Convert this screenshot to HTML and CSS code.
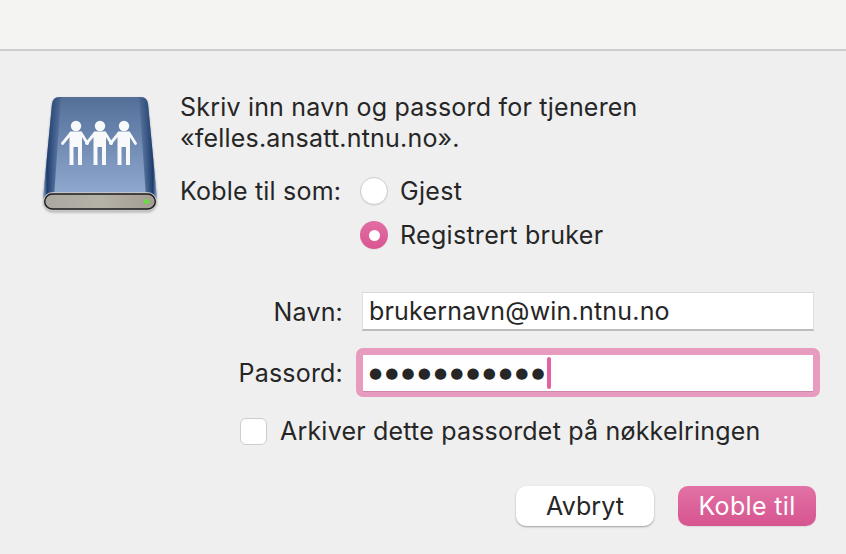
FILE: index.html
```html
<!DOCTYPE html>
<html lang="no">
<head>
<meta charset="utf-8">
<title>Koble til tjener</title>
<link rel="stylesheet" href="styles.css">
</head>
<body>
<div class="titlebar"></div>
<main class="dialog">
  <section class="intro">
    <svg class="drive" viewBox="42 97 116 116" width="116" height="116" aria-hidden="true">
      <defs>
        <linearGradient id="bodyFill" x1="0" y1="0" x2="0" y2="1">
          <stop offset="0" stop-color="#536f98"/>
          <stop offset="1" stop-color="#92abd1"/>
        </linearGradient>
        <linearGradient id="edgeL" x1="0" y1="0" x2="1" y2="0">
          <stop offset="0" stop-color="#9db0cc"/>
          <stop offset=".2" stop-color="#1d3c6d"/>
          <stop offset="1" stop-color="#1d3c6d" stop-opacity="0"/>
        </linearGradient>
        <linearGradient id="edgeR" x1="1" y1="0" x2="0" y2="0">
          <stop offset="0" stop-color="#9db0cc"/>
          <stop offset=".2" stop-color="#1d3c6d"/>
          <stop offset="1" stop-color="#1d3c6d" stop-opacity="0"/>
        </linearGradient>
        <linearGradient id="slot" x1="0" y1="0" x2="1" y2="0">
          <stop offset="0" stop-color="#aaa89f"/>
          <stop offset=".5" stop-color="#b5b2a8"/>
          <stop offset="1" stop-color="#a39c92"/>
        </linearGradient>
        <g id="person">
          <circle cx="76" cy="126" r="5.2"/>
          <path d="M71 131.500H81Q82 131.500 82 133V165H78V147H73.500V165H69.500V133Q69.500 131.500 71 131.500Z"/>
          <path d="M71 133L62.500 143.500M81 133L87.500 143.500" fill="none" stroke="#f8f9fb" stroke-width="2.800" stroke-linecap="round"/>
        </g>
      </defs>
      <path d="M59 97H141Q147 97 148 104L157 198H43L52 104Q53 97 59 97Z" fill="url(#bodyFill)"/>
      <path d="M59 97Q53 97 52 104L43 198H54L60.500 104Q61 99 63 97Z" fill="url(#edgeL)"/>
      <path d="M141 97Q147 97 148 104L157 198H146L139.500 104Q139 99 137 97Z" fill="url(#edgeR)"/>
      <rect x="43" y="192" width="114" height="19.500" rx="9.750" fill="#c3c5c8"/>
      <rect x="44.700" y="194" width="110.600" height="15" rx="7.500" fill="url(#slot)" stroke="#1b1b1b" stroke-width="1.400"/>
      <circle cx="146.500" cy="201.500" r="2.500" fill="#66e03f"/>
      <g fill="#f8f9fb">
        <use href="#person"/>
        <use href="#person" x="24"/>
        <use href="#person" x="48"/>
      </g>
    </svg>
    <div class="intro-text">
      <p class="message">Skriv inn navn og passord for tjeneren<br>«felles.ansatt.ntnu.no».</p>
      <div class="connect-as">
        <span class="connect-label">Koble til som:</span>
        <div class="radios">
          <label class="radio-row"><span class="radio"></span>Gjest</label>
          <label class="radio-row"><span class="radio radio-on"></span>Registrert bruker</label>
        </div>
      </div>
    </div>
  </section>
  <section class="fields">
    <span class="field-label">Navn:</span>
    <div class="field">brukernavn@win.ntnu.no</div>
    <span class="field-label">Passord:</span>
    <div class="field field-focus"><span class="dots">●●●●●●●●●●●</span><span class="caret"></span></div>
  </section>
  <label class="keychain"><span class="checkbox"></span>Arkiver dette passordet på nøkkelringen</label>
  <div class="actions">
    <button class="btn" type="button">Avbryt</button>
    <button class="btn btn-primary" type="button">Koble til</button>
  </div>
</main>
</body>
</html>
```
FILE: styles.css
```css
* { box-sizing: border-box; }
html, body { height: 100%; }
body {
  margin: 0;
  background: #efefef;
  color: #262626;
  font-family: Inter, "Liberation Sans", sans-serif;
  font-size: 25px;
  letter-spacing: .2px;
  overflow: hidden;
}
.titlebar {
  height: 51px;
  background: #f4f4f3;
  border-bottom: 2px solid #cecece;
}
.dialog { display: flex; flex-direction: column; }
.intro {
  display: flex;
  gap: 22px;
  padding: 41px 0 0 42px;
}
.drive {
  margin-top: 5px;
  flex: none;
  filter: drop-shadow(0 1px 1px rgba(0, 0, 0, .25));
}
.message { margin: 0; line-height: 31px; }
.connect-as { display: flex; margin-top: 15px; }
.connect-label { line-height: 44px; width: 180px; }
.radio-row {
  display: flex;
  align-items: center;
  gap: 12px;
  height: 44px;
  letter-spacing: .3px;
}
.radio {
  width: 28px;
  height: 28px;
  border-radius: 50%;
  background: #fff;
  border: 1px solid #cbcbcb;
  box-shadow: 0 1px 1px rgba(0, 0, 0, .06);
}
.radio-on {
  display: flex;
  align-items: center;
  justify-content: center;
  border: 0;
  background: linear-gradient(#e26ea3, #d95592);
}
.radio-on::after {
  content: "";
  width: 11px;
  height: 11px;
  border-radius: 50%;
  background: #fff;
}
.fields {
  display: grid;
  grid-template-columns: 343px 452px;
  column-gap: 19px;
  row-gap: 24px;
  margin-top: 35px;
  align-items: center;
}
.field-label { text-align: right; }
.field {
  display: flex;
  align-items: center;
  height: 39px;
  padding-left: 6px;
  background: #fff;
  border: 1px solid #dedede;
  border-top-color: #d9d9d9;
  border-bottom: 2px solid #bdbdbd;
}
.field-focus {
  position: relative;
  height: 36px;
  padding-left: 7px;
  border: 0;
}
.field-focus::before {
  content: "";
  position: absolute;
  inset: -7px -6px -6px;
  border: 7px solid #e79bbe;
  border-bottom-width: 6px;
  border-radius: 7px;
}
.field-focus::after {
  content: "";
  position: absolute;
  left: 1px;
  right: 1px;
  bottom: -1px;
  height: 1px;
  background: #d187ac;
}
.dots {
  font-family: "DejaVu Sans", sans-serif;
  font-size: 15px;
  letter-spacing: 3.15px;
  color: #262626;
}
.caret {
  width: 4px;
  height: 32px;
  margin-left: -1px;
  border-radius: 2px;
  background: #e562a1;
}
.keychain {
  display: flex;
  align-items: center;
  gap: 13px;
  margin: 26px 0 0 240px;
  height: 28px;
}
.checkbox {
  width: 27px;
  height: 27px;
  border-radius: 6px;
  background: #fff;
  border: 1px solid #cdcdcd;
}
.actions {
  display: flex;
  justify-content: flex-end;
  gap: 24px;
  margin-top: 41px;
  padding-right: 30px;
}
.btn {
  width: 138px;
  height: 40px;
  padding: 0;
  border: 0;
  border-radius: 10px;
  background: #fff;
  color: #262626;
  font: inherit;
  letter-spacing: .1px;
  box-shadow: 0 1px 2px rgba(0, 0, 0, .35);
}
.btn-primary {
  color: #fff;
  letter-spacing: .35px;
  background: linear-gradient(#e272a6, #d6548f);
  box-shadow: 0 1px 1px rgba(0, 0, 0, .08);
}
```
